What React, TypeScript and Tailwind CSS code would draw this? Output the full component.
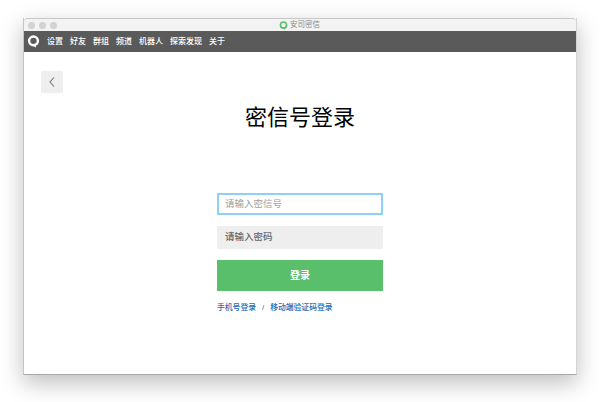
const navItems = ["设置", "好友", "群组", "频道", "机器人", "探索发现", "关于"];

const cjk = { fontFamily: '"Liberation Sans", "Noto Sans CJK SC", sans-serif' };

const Logo = ({ size, color }: { size: number; color: string }) => (
  <svg width={size} height={size} viewBox="0 0 16 16" fill="none">
    <circle cx="8" cy="7.2" r="5.4" stroke={color} strokeWidth="3" />
    <path d="M6.5 11.5 10.6 15.8 11.4 10.5Z" fill={color} />
  </svg>
);

export default function App() {
  return (
    <div className="h-[402px] w-[600px] overflow-hidden bg-white pl-[23px] pt-[18px]" style={cjk}>
      <div className="flex h-[357px] w-[554px] flex-col border-b border-l border-r border-b-[#a8a8a8] border-l-[#c4c4c4] border-r-[#d4d4d4] bg-white shadow-[0_8px_22px_rgba(0,0,0,0.26)]">
        <div className="flex h-[13px] shrink-0 items-center rounded-t-[3px] border-t border-[#c8c8c8] bg-[#f3f3f3]">
          <div className="flex gap-[4px] pl-[4px]">
            <span className="h-[7px] w-[7px] rounded-full bg-[#d2d2d2]" />
            <span className="h-[7px] w-[7px] rounded-full bg-[#d2d2d2]" />
            <span className="h-[7px] w-[7px] rounded-full bg-[#d2d2d2]" />
          </div>
          <div className="ml-[222px] flex items-center gap-[2px] text-[7.5px] leading-none text-[#8a8a8a]">
            <Logo size={9} color="#5cc06c" />
            <span>安司密信</span>
          </div>
        </div>

        <div className="flex h-[21px] shrink-0 items-center bg-[#5a5a5a] pl-[3px] text-[8px] font-medium text-white">
          <Logo size={13} color="#ffffff" />
          <nav className="ml-[7px] flex gap-[7px]">
            {navItems.map((item) => (
              <span key={item} className="leading-none">
                {item}
              </span>
            ))}
          </nav>
        </div>

        <div className="flex flex-1 flex-col px-[17px] pt-[19px]">
          <button className="flex h-[22px] w-[22px] items-center justify-center bg-[#eeeeee]">
            <svg width="8" height="12" viewBox="0 0 8 12" fill="none">
              <path d="M6 1.5 2 6l4 4.5" stroke="#777777" strokeWidth="1.1" />
            </svg>
          </button>

          <div className="mx-auto flex w-[166px] flex-col items-center">
            <h1 className="whitespace-nowrap text-[22px] font-normal leading-[50px] text-black">
              密信号登录
            </h1>
            <div className="mt-[50px] flex h-[22px] w-full items-center border-2 border-[#8fd0f8] bg-white pl-[6px] text-[9.5px] text-[#a0a0a0]">
              请输入密信号
            </div>
            <div className="mt-[11px] flex h-[23px] w-full items-center bg-[#eeeeee] pl-[8px] text-[9.5px] font-medium text-[#666666]">
              请输入密码
            </div>
            <button className="mt-[11px] h-[31px] w-full bg-[#5abf6a] text-[10px] font-bold text-white">
              登录
            </button>
            <div className="mt-[11px] flex w-full gap-[6px] whitespace-nowrap text-[7.8px] font-medium leading-[12px] text-[#1a69b5]">
              <span>手机号登录</span>
              <span>/</span>
              <span>移动端验证码登录</span>
            </div>
          </div>
        </div>
      </div>
    </div>
  );
}
